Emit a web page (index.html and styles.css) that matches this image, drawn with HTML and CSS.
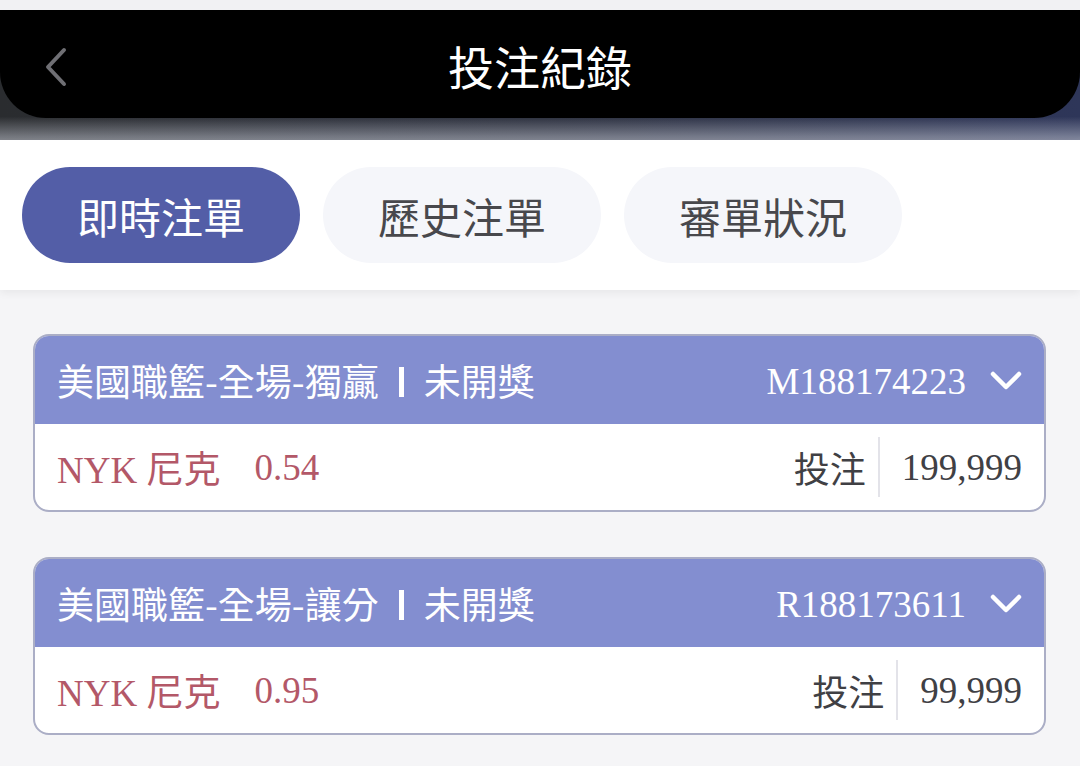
FILE: index.html
```html
<!DOCTYPE html>
<html lang="zh-Hant">
<head>
<meta charset="utf-8">
<title>投注紀錄</title>
<link rel="stylesheet" href="styles.css">
</head>
<body>
<div class="page">
  <div class="topgap"></div>
  <header class="header">
    <div class="header-bar">
      <button class="back" aria-label="back">
        <svg width="28" height="42" viewBox="0 0 28 42"><path d="M22 4 L6 21 L22 38" fill="none" stroke="#6f6f74" stroke-width="4" stroke-linecap="round" stroke-linejoin="round"/></svg>
      </button>
      <h1 class="title">投注紀錄</h1>
    </div>
  </header>
  <nav class="tabs">
    <div class="tab active">即時注單</div>
    <div class="tab">歷史注單</div>
    <div class="tab">審單狀況</div>
  </nav>
  <main class="list">
    <section class="card">
      <div class="card-head">
        <div class="head-left">美國職籃-全場-獨贏<span class="bar"></span>未開獎</div>
        <div class="head-right">
          <span class="order">M188174223</span>
          <svg class="chev" width="32" height="22" viewBox="0 0 32 22"><path d="M3 4 L16 17 L29 4" fill="none" stroke="#fff" stroke-width="4.5" stroke-linecap="round" stroke-linejoin="round"/></svg>
        </div>
      </div>
      <div class="card-body">
        <div class="pick"><span class="team">NYK 尼克</span><span class="odds">0.54</span></div>
        <div class="stake"><span class="stake-label">投注</span><span class="divider"></span><span class="amount">199,999</span></div>
      </div>
    </section>
    <section class="card">
      <div class="card-head">
        <div class="head-left">美國職籃-全場-讓分<span class="bar"></span>未開獎</div>
        <div class="head-right">
          <span class="order">R188173611</span>
          <svg class="chev" width="32" height="22" viewBox="0 0 32 22"><path d="M3 4 L16 17 L29 4" fill="none" stroke="#fff" stroke-width="4.5" stroke-linecap="round" stroke-linejoin="round"/></svg>
        </div>
      </div>
      <div class="card-body">
        <div class="pick"><span class="team">NYK 尼克</span><span class="odds">0.95</span></div>
        <div class="stake"><span class="stake-label">投注</span><span class="divider"></span><span class="amount">99,999</span></div>
      </div>
    </section>
  </main>
</div>
</body>
</html>
```

FILE: styles.css
```css
* { box-sizing: border-box; }
html, body { margin: 0; padding: 0; }
body {
  width: 1080px;
  height: 766px;
  overflow: hidden;
  background: #f5f5f7;
  font-family: "Noto Sans CJK TC", "Noto Sans", sans-serif;
}
.page { display: flex; flex-direction: column; }
.topgap { height: 10px; background: #f1f1f3; }
.header {
  height: 130px;
  background:
    linear-gradient(180deg, rgba(255,255,255,0) 0%, rgba(255,255,255,0) 82%, rgba(200,204,215,0.55) 100%),
    linear-gradient(90deg, #2a2c2f 0%, #2b2f3d 50%, #2e3659 100%);
}
.header-bar {
  height: 108px;
  background: #000;
  border-radius: 0 0 46px 46px;
  display: flex;
  align-items: center;
  justify-content: center;
  position: relative;
}
.back {
  position: absolute;
  left: 42px;
  top: 36px;
  width: 28px;
  height: 42px;
  padding: 0;
  border: 0;
  background: none;
  display: block;
}
.back svg { display: block; }
.title {
  margin: 0;
  color: #fff;
  font-size: 46px;
  font-weight: 400;
  letter-spacing: 0;
  line-height: 1;
  padding-top: 2px;
}
.tabs {
  height: 150px;
  background: #fff;
  display: flex;
  align-items: center;
  gap: 23px;
  padding: 0 22px;
  box-shadow: 0 3px 8px rgba(0,0,0,0.06);
  position: relative;
}
.tab {
  width: 278px;
  height: 96px;
  border-radius: 48px;
  background: #f5f6fa;
  color: #48484c;
  font-size: 42px;
  display: flex;
  align-items: center;
  justify-content: center;
}
.tab.active { background: #535ea7; color: #fff; }
.list {
  padding: 44px 34px 0 33px;
  display: flex;
  flex-direction: column;
  gap: 45px;
}
.card {
  border: 2px solid #abaec6;
  border-radius: 16px;
  overflow: hidden;
  background: #fff;
}
.card-head {
  height: 88px;
  background: #838ed0;
  display: flex;
  align-items: center;
  justify-content: space-between;
  padding: 0 22px 0 22px;
  color: #fff;
}
.head-left {
  font-size: 37px;
  display: flex;
  align-items: center;
}
.bar {
  display: inline-block;
  width: 5px;
  height: 30px;
  background: #fff;
  margin: 4px 20px 0 20px;
}
.head-right { display: flex; align-items: center; gap: 24px; }
.order {
  font-family: "Liberation Serif", serif;
  font-size: 37px;
  padding-top: 2px;
}
.chev { display: block; margin-top: 2px; }
.card-body {
  height: 86px;
  display: flex;
  align-items: center;
  justify-content: space-between;
  padding: 0 22px;
}
.pick {
  color: #b35868;
  font-family: "Liberation Serif", "Noto Sans CJK TC", serif;
  font-size: 37px;
  display: flex;
  align-items: center;
}
.odds { margin-left: 34px; }
.stake {
  display: flex;
  align-items: center;
  color: #404044;
}
.stake-label { font-size: 36px; }
.divider {
  width: 2px;
  height: 60px;
  background: #e3e3e9;
  margin: 0 22px 0 12px;
}
.amount {
  font-family: "Liberation Serif", serif;
  font-size: 37px;
}
```
